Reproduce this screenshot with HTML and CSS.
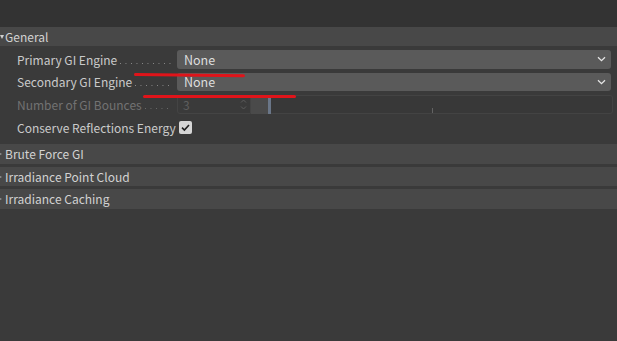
FILE: index.html
```html
<!DOCTYPE html>
<html>
<head>
<meta charset="utf-8">
<link rel="stylesheet" href="styles.css">
</head>
<body>
<div class="top"></div>
<div class="panel">
  <div class="group-head open"><span class="tri-down"></span>General</div>
  <div class="group-body">
    <div class="row">
      <div class="label"><span>Primary GI Engine</span><span class="leader"></span></div>
      <div class="select"><span>None</span><svg class="chev" width="9" height="6" viewBox="0 0 9 6"><path d="M1 1.2 L4.5 4.6 L8 1.2" fill="none" stroke="#e6e6e6" stroke-width="1.3"/></svg></div>
    </div>
    <div class="row">
      <div class="label"><span>Secondary GI Engine</span><span class="leader"></span></div>
      <div class="select"><span>None</span><svg class="chev" width="9" height="6" viewBox="0 0 9 6"><path d="M1 1.2 L4.5 4.6 L8 1.2" fill="none" stroke="#e6e6e6" stroke-width="1.3"/></svg></div>
    </div>
    <div class="row disabled">
      <div class="label"><span>Number of GI Bounces</span><span class="leader"></span></div>
      <div class="numslider">
        <div class="num"><span>3</span><svg class="spin" width="7" height="13" viewBox="0 0 7 13"><path d="M1 4.5 L3.5 2 L6 4.5 M1 8.5 L3.5 11 L6 8.5" fill="none" stroke="#5c5c5c" stroke-width="1"/></svg></div>
        <div class="fill"></div>
        <div class="thumb"></div>
        <div class="track"><span class="tick"></span></div>
      </div>
    </div>
    <div class="row check-row">
      <div class="label plain"><span>Conserve Reflections Energy</span></div>
      <div class="checkbox"><svg width="13" height="13" viewBox="0 0 13 13"><path d="M3 6.6 L5.4 9 L10 4" fill="none" stroke="#1e1e1e" stroke-width="1.6"/></svg></div>
    </div>
  </div>
  <div class="group-head"><span class="tri-right"></span>Brute Force GI</div>
  <div class="group-head"><span class="tri-right"></span>Irradiance Point Cloud</div>
  <div class="group-head"><span class="tri-right"></span>Irradiance Caching</div>
</div>
<div class="mark mark1"></div>
<div class="mark mark2"></div>
</body>
</html>
```

FILE: styles.css
```css
html, body {
  margin: 0;
  padding: 0;
}
body {
  width: 617px;
  height: 341px;
  overflow: hidden;
  background: #3a3a3a;
  font-family: "Noto Sans CJK KR", "Noto Sans", sans-serif;
  font-size: 12px;
  color: #cacaca;
  position: relative;
}
.top {
  height: 27px;
  background: #333333;
}
.panel {
  display: flex;
  flex-direction: column;
}
.group-head {
  height: 19.5px;
  background: #484848;
  display: flex;
  align-items: center;
  padding-left: 5px;
  color: #d2d2d2;
  font-size: 12px;
  position: relative;
  margin-top: 3px;
}
.group-head.open {
  margin-top: 0;
  height: 19px;
}
.tri-down {
  position: absolute;
  left: 0;
  top: 8px;
  width: 0;
  height: 0;
  border-left: 2.5px solid transparent;
  border-right: 2.5px solid transparent;
  border-top: 4px solid #cfcfcf;
}
.tri-right {
  position: absolute;
  left: -2px;
  top: 8px;
  width: 0;
  height: 0;
  border-top: 2.5px solid transparent;
  border-bottom: 2.5px solid transparent;
  border-left: 4px solid #9a9a9a;
}
.group-body {
  display: flex;
  flex-direction: column;
  padding: 4px 6px 0 17px;
  gap: 4px;
}
.row {
  display: flex;
  align-items: center;
  height: 18.5px;
}
.label {
  width: 160px;
  display: flex;
  align-items: center;
  white-space: nowrap;
  color: #cacaca;
}
.label.plain {
  width: auto;
  margin-right: 3px;
}
.leader {
  flex: 1;
  height: 1px;
  margin: 8px 6px 0 3px;
  background-image: linear-gradient(to right, #8a8a8a 1px, transparent 1px);
  background-size: 5.5px 1px;
  background-repeat: repeat-x;
}
.select {
  flex: 1;
  height: 18.5px;
  background: #5a5a5a;
  border-radius: 3px;
  display: flex;
  align-items: center;
  justify-content: space-between;
  padding: 0 5px 0 7px;
  color: #dedede;
  font-size: 12.5px;
}
.chev {
  display: block;
}
.disabled .label {
  color: #727272;
}
.disabled .leader {
  background-image: linear-gradient(to right, #6a6a6a 1px, transparent 1px);
}
.numslider {
  flex: 1;
  height: 19px;
  display: flex;
  align-items: stretch;
  margin-right: -2px;
}
.num {
  width: 74px;
  box-sizing: border-box;
  border: 1px solid #444444;
  border-radius: 3px 0 0 3px;
  background: #3a3a3a;
  display: flex;
  align-items: center;
  justify-content: space-between;
  padding: 0 3px 0 5px;
  color: #5e5e5e;
}
.spin {
  display: block;
}
.fill {
  width: 17px;
  background: #4a4a4a;
}
.thumb {
  width: 3px;
  background: #6a7688;
}
.track {
  flex: 1;
  position: relative;
  box-sizing: border-box;
  border: 1px solid #434343;
  border-left: none;
  border-radius: 0 3px 3px 0;
  background: #383838;
}
.tick {
  position: absolute;
  left: 161px;
  bottom: 0;
  width: 1px;
  height: 5px;
  background: #636363;
}
.check-row {
  height: 20px;
  margin-top: 0;
  margin-bottom: 3.5px;
}
.checkbox {
  width: 13px;
  height: 13px;
  border-radius: 2px;
  background: #d6d6d6;
}
.checkbox svg {
  display: block;
}
.mark {
  position: absolute;
  height: 3px;
  background: #e0141a;
  border-radius: 2px;
}
.mark1 {
  left: 134px;
  top: 73px;
  width: 111px;
  transform: rotate(0.6deg);
  transform-origin: left center;
}
.mark2 {
  left: 143px;
  top: 94.5px;
  width: 153px;
}
```
